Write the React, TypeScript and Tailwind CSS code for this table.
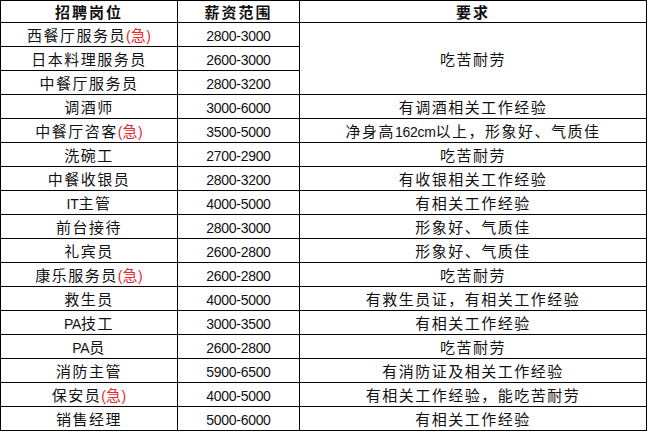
import React from "react";

type Row = { pos: string; urgent?: boolean; pay: string; req?: string; span?: number };

const rows: Row[] = [
  { pos: "西餐厅服务员", urgent: true, pay: "2800-3000", req: "吃苦耐劳", span: 3 },
  { pos: "日本料理服务员", pay: "2600-3000" },
  { pos: "中餐厅服务员", pay: "2800-3200" },
  { pos: "调酒师", pay: "3000-6000", req: "有调酒相关工作经验" },
  { pos: "中餐厅咨客", urgent: true, pay: "3500-5000", req: "净身高162cm以上，形象好、气质佳" },
  { pos: "洗碗工", pay: "2700-2900", req: "吃苦耐劳" },
  { pos: "中餐收银员", pay: "2800-3200", req: "有收银相关工作经验" },
  { pos: "IT主管", pay: "4000-5000", req: "有相关工作经验" },
  { pos: "前台接待", pay: "2800-3000", req: "形象好、气质佳" },
  { pos: "礼宾员", pay: "2600-2800", req: "形象好、气质佳" },
  { pos: "康乐服务员", urgent: true, pay: "2600-2800", req: "吃苦耐劳" },
  { pos: "救生员", pay: "4000-5000", req: "有救生员证，有相关工作经验" },
  { pos: "PA技工", pay: "3000-3500", req: "有相关工作经验" },
  { pos: "PA员", pay: "2600-2800", req: "吃苦耐劳" },
  { pos: "消防主管", pay: "5900-6500", req: "有消防证及相关工作经验" },
  { pos: "保安员", urgent: true, pay: "4000-5000", req: "有相关工作经验，能吃苦耐劳" },
  { pos: "销售经理", pay: "5000-6000", req: "有相关工作经验" },
];

function Txt({ text }: { text: string }) {
  const parts = text.split(/([\x00-\x7F]+)/).filter((p) => p.length > 0);
  return (
    <>
      {parts.map((p, i) =>
        /^[\x00-\x7F]+$/.test(p) ? (
          <span key={i} className="font-['Liberation_Sans',sans-serif] text-[14px] tracking-[-0.3px]">
            {p}
          </span>
        ) : (
          <span key={i} className="tracking-[1.5px]">
            {p}
          </span>
        )
      )}
    </>
  );
}

export default function App() {
  const cell = "border border-black text-center align-middle p-0 whitespace-nowrap";
  return (
    <div className="w-[648px] h-[432px] bg-white font-['Noto_Sans_CJK_SC',sans-serif] text-[15px] text-[#111] leading-none">
      <table className="border-collapse table-fixed w-[646px]">
        <colgroup>
          <col className="w-[177px]" />
          <col className="w-[122px]" />
          <col className="w-[347px]" />
        </colgroup>
        <thead>
          <tr className="h-[22px]">
            <th className={`${cell} font-bold tracking-[2px]`}>招聘岗位</th>
            <th className={`${cell} font-bold tracking-[2px]`}>薪资范围</th>
            <th className={`${cell} font-bold tracking-[2px]`}>要求</th>
          </tr>
        </thead>
        <tbody>
          {rows.map((r, i) => (
            <tr key={i} className="h-[24px]">
              <td className={cell}>
                <Txt text={r.pos} />
                {r.urgent && (
                  <span className="text-[#e8262a]">
                    <span className="font-['Liberation_Sans',sans-serif] text-[14px]">(</span>
                    <span className="tracking-[0.5px]">急</span>
                    <span className="font-['Liberation_Sans',sans-serif] text-[14px]">)</span>
                  </span>
                )}
              </td>
              <td className={cell}>
                <Txt text={r.pay} />
              </td>
              {r.req !== undefined && (
                <td className={cell} rowSpan={r.span ?? 1}>
                  <Txt text={r.req} />
                </td>
              )}
            </tr>
          ))}
        </tbody>
      </table>
    </div>
  );
}
